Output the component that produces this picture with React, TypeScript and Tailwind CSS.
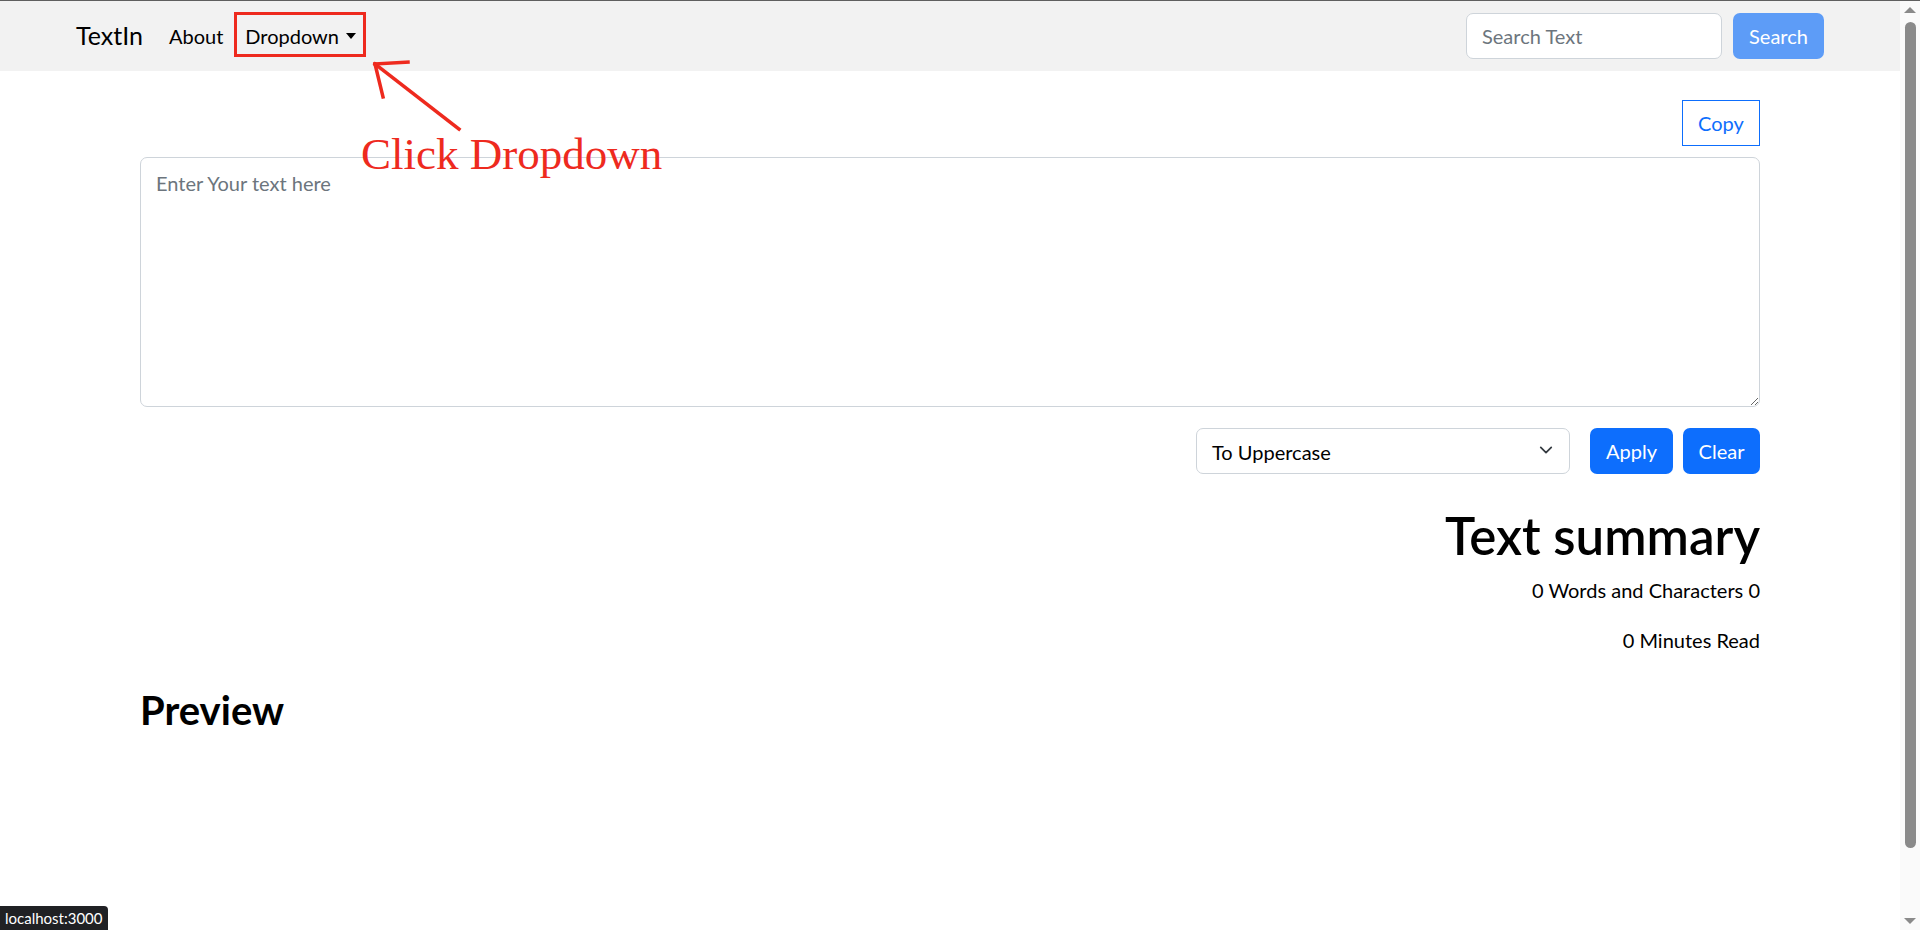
import React from 'react';

const font = { fontFamily: 'Lato, "Noto Sans", sans-serif' };

const Navbar: React.FC = () => (
  <nav className="relative h-[70px] bg-[#f2f2f2] flex items-center px-[76px]">
    <span className="text-[25px] text-black mr-[26px]">TextIn</span>
    <a className="text-[20px] text-black mr-[22px]">About</a>
    <a className="text-[20px] text-black flex items-center gap-[7px]">
      Dropdown
      <span className="w-0 h-0 border-l-[5px] border-r-[5px] border-t-[6px] border-l-transparent border-r-transparent border-t-black" />
    </a>
    <div className="ml-auto flex items-center gap-[11px]">
      <input
        className="w-[256px] h-[46px] rounded-[7px] border border-[#ced4da] bg-white px-[15px] text-[20px] outline-none placeholder:text-[#6c757d]"
        placeholder="Search Text"
      />
      <button className="h-[46px] w-[91px] rounded-[7px] bg-[#5d9cf7] text-white text-[20px]">Search</button>
    </div>
  </nav>
);

const Annotation: React.FC = () => (
  <>
    <div className="absolute left-[234px] top-[12px] w-[132px] h-[45px] border-[3px] border-[#ee2a1e] pointer-events-none" />
    <svg className="absolute left-0 top-0 pointer-events-none" width="700" height="200">
      <g stroke="#ee2a1e" strokeWidth="3.5" fill="none" strokeLinecap="square">
        <line x1="459" y1="129" x2="375" y2="64" />
        <line x1="375" y1="64" x2="408" y2="62" />
        <line x1="375" y1="64" x2="383" y2="97" />
      </g>
    </svg>
    <span
      className="absolute left-[361px] top-[128px] text-[45px] leading-[52px] text-[#ee2a1e] whitespace-nowrap"
      style={{ fontFamily: '"Liberation Serif", serif' }}
    >
      Click Dropdown
    </span>
  </>
);

const Scrollbar: React.FC = () => (
  <div className="w-[20px] h-full bg-[#fafafa] flex flex-col items-center">
    <span className="mt-[6px] w-0 h-0 border-l-[6px] border-r-[6px] border-b-[6px] border-l-transparent border-r-transparent border-b-[#8a8a8a]" />
    <div className="mt-[9px] w-[11px] h-[826px] rounded-full bg-[#8a8a8a]" />
    <span className="mt-auto mb-[6px] w-0 h-0 border-l-[6px] border-r-[6px] border-t-[6px] border-l-transparent border-r-transparent border-t-[#8a8a8a]" />
  </div>
);

export default function App() {
  return (
    <div className="relative w-[1920px] h-[930px] overflow-hidden bg-white text-black" style={font}>
      <div className="h-[1px] bg-[#5f5f5f]" />
      <div className="flex h-[929px]">
        <div className="flex-1 flex flex-col">
          <Navbar />
          <main className="w-[1620px] mx-auto">
            <div className="flex justify-end mt-[29px]">
              <button className="h-[46px] w-[78px] border border-[#0d6efd] text-[#0d6efd] text-[20px]">Copy</button>
            </div>
            <textarea
              className="mt-[11px] block w-full h-[250px] rounded-[7px] border border-[#ced4da] px-[15px] py-[10px] text-[20px] outline-none placeholder:text-[#6c757d]"
              placeholder="Enter Your text here"
            />
            <div className="flex justify-end items-center mt-[21px]">
              <div className="relative w-[374px] h-[46px] rounded-[7px] border border-[#ced4da] flex items-center px-[15px] pt-[2px] text-[20px]">
                To Uppercase
                <svg className="absolute right-[16px] top-[16px]" width="14" height="10" viewBox="0 0 16 10">
                  <path d="M2 2l6 6 6-6" stroke="#343a40" strokeWidth="2" fill="none" strokeLinecap="round" strokeLinejoin="round" />
                </svg>
              </div>
              <button className="ml-[20px] h-[46px] w-[83px] rounded-[7px] bg-[#0d6efd] text-white text-[20px]">Apply</button>
              <button className="ml-[10px] h-[46px] w-[77px] rounded-[7px] bg-[#0d6efd] text-white text-[20px]">Clear</button>
            </div>
            <div className="text-right mt-[32px]">
              <h1 className="text-[51px] leading-[60px] font-semibold">Text summary</h1>
              <p className="mt-[9px] text-[20px] leading-[30px]">0 Words and Characters 0</p>
              <p className="mt-[20px] text-[20px] leading-[30px]">0 Minutes Read</p>
            </div>
            <h2 className="mt-[31px] text-[40px] leading-[48px] font-bold">Preview</h2>
          </main>
        </div>
        <Scrollbar />
      </div>
      <Annotation />
      <div className="absolute left-0 bottom-0 h-[24px] px-[5px] bg-[#202124] text-white text-[15px] leading-[24px] rounded-tr-[4px]">
        localhost:3000
      </div>
    </div>
  );
}
